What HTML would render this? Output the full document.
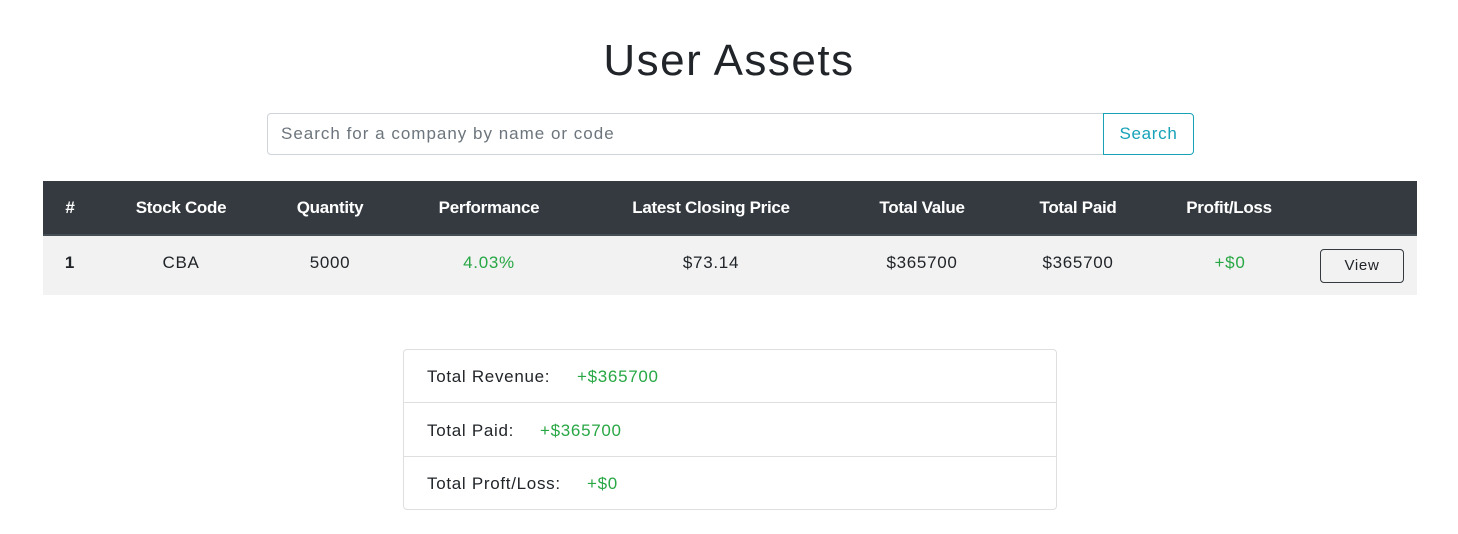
<!DOCTYPE html>
<html><head><style>
body{margin:0;width:1458px;height:534px;background:#fff;font-family:"Liberation Sans",sans-serif;color:#212529;position:relative;overflow:hidden;letter-spacing:0.7px}
.a{position:absolute}
h1{position:absolute;top:36px;left:0;width:1458px;text-align:center;margin:0;font-weight:400;font-size:44px;line-height:50px;letter-spacing:1.5px}
.inp{left:267px;top:113px;box-sizing:border-box;width:837px;height:42px;border:1px solid #ced4da;border-radius:4px 0 0 4px;font-size:17px;color:#6c757d;padding:10px 13px;letter-spacing:1px}
.btn{left:1103px;top:113px;width:91px;height:42px;box-sizing:border-box;border:1px solid #17a2b8;border-radius:0 4px 4px 0;color:#17a2b8;font-size:17px;text-align:center;line-height:40px}
.hd{left:43px;top:181px;width:1374px;height:53px;background:#343a40;border-bottom:2px solid #454d55}
.rw{left:43px;top:236px;width:1374px;height:59px;background:#f2f2f2}
.c{position:absolute;transform:translateX(-50%);white-space:nowrap;font-size:17px}
.h{top:198px;color:#fff;font-weight:bold;letter-spacing:-0.3px}
.r{top:253px}
.g{color:#28a745}
.view{left:1320px;top:249px;width:84px;height:34px;box-sizing:border-box;border:1px solid #343a40;border-radius:4px;font-size:15px;text-align:center;line-height:32px}
.card{left:403px;top:349px;width:654px;height:161px;box-sizing:border-box;border:1px solid #dfdfdf;border-radius:4px}
.li{position:absolute;left:23px;font-size:17px}
.sep{position:absolute;left:0;width:652px;height:1px;background:#dfdfdf}
</style></head><body>
<h1>User Assets</h1>
<div class="a inp">Search for a company by name or code</div>
<div class="a btn">Search</div>
<div class="a hd"></div>
<div class="a rw"></div>
<div class="c h" style="left:70px">#</div>
<div class="c h" style="left:181px">Stock Code</div>
<div class="c h" style="left:330px">Quantity</div>
<div class="c h" style="left:489px">Performance</div>
<div class="c h" style="left:711px">Latest Closing Price</div>
<div class="c h" style="left:922px">Total Value</div>
<div class="c h" style="left:1078px">Total Paid</div>
<div class="c h" style="left:1229px">Profit/Loss</div>
<div class="c r" style="left:70px;font-weight:bold">1</div>
<div class="c r" style="left:181px">CBA</div>
<div class="c r" style="left:330px">5000</div>
<div class="c r g" style="left:489px">4.03%</div>
<div class="c r" style="left:711px">$73.14</div>
<div class="c r" style="left:922px">$365700</div>
<div class="c r" style="left:1078px">$365700</div>
<div class="c r g" style="left:1230px">+$0</div>
<div class="a view">View</div>
<div class="a card">
<div class="li" style="top:17px">Total Revenue:<span class="g" style="position:absolute;left:150px">+$365700</span></div>
<div class="sep" style="top:52px"></div>
<div class="li" style="top:71px">Total Paid:<span class="g" style="position:absolute;left:113px">+$365700</span></div>
<div class="sep" style="top:106px"></div>
<div class="li" style="top:124px">Total Proft/Loss:<span class="g" style="position:absolute;left:160px">+$0</span></div>
</div>
</body></html>
